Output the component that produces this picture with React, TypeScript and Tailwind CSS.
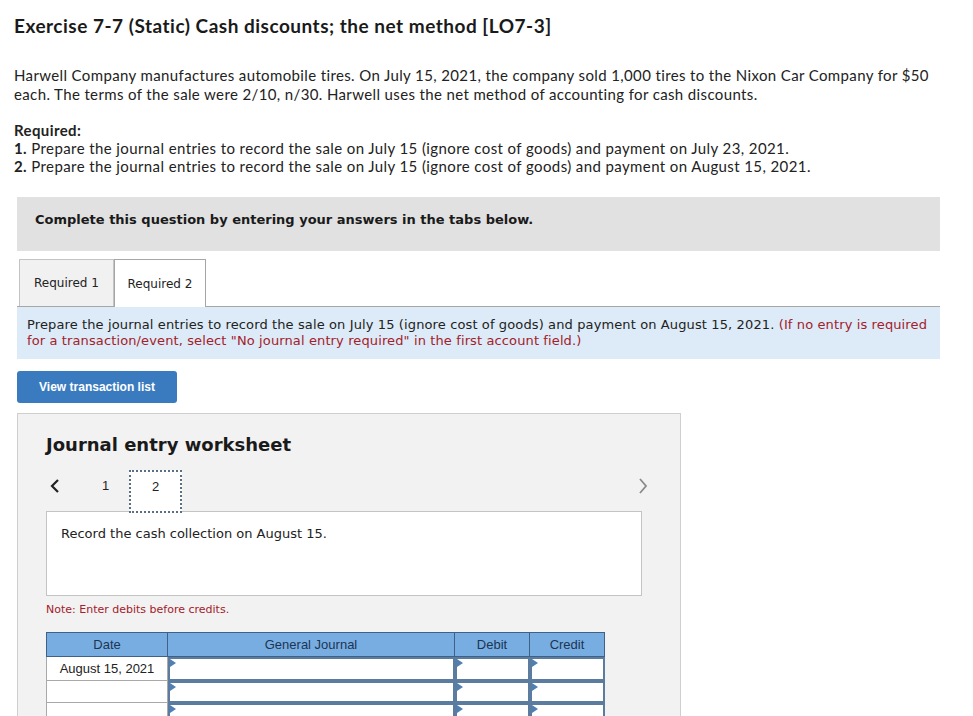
const verdana = "[font-family:'DejaVu_Sans',Verdana,sans-serif]";
const arial = "font-['Liberation_Sans',Arial,sans-serif]";

function InputCell({ w }: { w: string }) {
  return (
    <div className={`${w} relative h-full border-2 border-[#5b7c9e] bg-white`}>
      <svg className="absolute left-0 top-0" width="6" height="8" viewBox="0 0 6 8">
        <path d="M0 0 L6 4 L0 8 Z" fill="#4f7fb3" />
      </svg>
    </div>
  );
}

function JournalRow({ date, h }: { date?: string; h: string }) {
  return (
    <div className={`flex ${h}`}>
      <div className={`w-[122px] flex items-center justify-center border border-t-0 border-[#a9a9a9] bg-white text-[13px] text-[#222] ${arial}`}>
        {date}
      </div>
      <InputCell w="w-[287px]" />
      <InputCell w="w-[75px]" />
      <InputCell w="w-[75px]" />
    </div>
  );
}

export default function App() {
  return (
    <div className="w-[973px] h-[716px] overflow-hidden bg-white text-[#222]">
      <div className="pl-[14px] pt-[14px] font-['Lato',sans-serif]">
        <h1 className="text-[19px] font-bold leading-[24px] tracking-[0.5px] text-[#1a1a1a]">
          Exercise 7-7 (Static) Cash discounts; the net method [LO7-3]
        </h1>
        <p className="mt-[28px] text-[15px] leading-[19px] tracking-[0.37px] whitespace-nowrap">
          Harwell Company manufactures automobile tires. On July 15, 2021, the company sold 1,000 tires to the Nixon Car Company for $50
          <br />
          each. The terms of the sale were 2/10, n/30. Harwell uses the net method of accounting for cash discounts.
        </p>
        <div className="mt-[17px] text-[15px] leading-[18px] tracking-[0.4px]">
          <div className="font-bold">Required:</div>
          <div>
            <span className="font-bold">1.</span> Prepare the journal entries to record the sale on July 15 (ignore cost of goods) and payment on July 23, 2021.
          </div>
          <div>
            <span className="font-bold">2.</span> Prepare the journal entries to record the sale on July 15 (ignore cost of goods) and payment on August 15, 2021.
          </div>
        </div>
      </div>

      <div className={`ml-[17px] w-[923px] ${verdana}`}>
        <div className="mt-[22px] h-[54px] bg-[#e1e1e1] pl-[18px] pt-[15px] text-[13px] font-bold leading-[16px] text-[#1a1a1a]">
          Complete this question by entering your answers in the tabs below.
        </div>

        <div className="mt-[8px] flex border-b border-[#a6a6a6] pl-[2px] text-[12px]">
          <div className="flex h-[47px] w-[95px] items-center justify-center border border-b-0 border-[#c4c4c4] bg-[#f1f1f1]">
            Required 1
          </div>
          <div className="-mb-px flex h-[48px] w-[92px] items-center justify-center border border-b-0 border-[#a6a6a6] bg-white">
            Required 2
          </div>
        </div>

        <div className="h-[52px] bg-[#dcebf7] pl-[10px] pr-[8px] pt-[10px] text-[13px] leading-[16px] tracking-[0.12px] text-[#222]">
          Prepare the journal entries to record the sale on July 15 (ignore cost of goods) and payment on August 15, 2021.{" "}
          <span className="text-[#a4202a]">
            (If no entry is required for a transaction/event, select "No journal entry required" in the first account field.)
          </span>
        </div>

        <button
          className={`mt-[12px] flex h-[32px] w-[160px] items-center justify-center rounded-[3px] bg-[#3a7bc0] text-[12px] font-bold text-white ${arial}`}
        >
          View transaction list
        </button>

        <div className="mt-[10px] h-[320px] w-[664px] border border-[#cfcfcf] bg-[#f2f2f2] pl-[28px] pt-[19px]">
          <h2 className="text-[18px] font-bold leading-[24px] text-[#1a1a1a]">Journal entry worksheet</h2>

          <div className="relative mt-[13px] flex h-[43px] items-start">
            <svg width="10" height="14" viewBox="0 0 10 14" className="ml-[4px] mt-[9px]">
              <path d="M8 1 L2 7 L8 13" stroke="#222" strokeWidth="2.2" fill="none" />
            </svg>
            <span className={`ml-[42px] mt-[8px] text-[13px] leading-[16px] ${arial}`}>1</span>
            <div className={`relative z-10 ml-[20px] flex h-[43px] w-[53px] justify-center border-2 border-dotted border-[#5b6f84] bg-white pt-[7px] text-[13px] leading-[16px] ${arial}`}>
              2
            </div>
            <svg width="10" height="16" viewBox="0 0 10 16" className="absolute left-[592px] top-[8px]">
              <path d="M2 1 L8 8 L2 15" stroke="#8a8a8a" strokeWidth="1.8" fill="none" />
            </svg>
          </div>

          <div className="-mt-[2px] h-[85px] w-[596px] border border-[#c4c4c4] bg-white pl-[14px] pt-[14px] text-[13px] leading-[16px]">
            Record the cash collection on August 15.
          </div>

          <div className="mt-[7px] text-[11px] leading-[14px] text-[#a4202a]">Note: Enter debits before credits.</div>

          <div className="mt-[15px] w-[559px]">
            <div className={`flex h-[25px] bg-[#78ade2] text-[13px] text-[#1c3553] ${arial}`}>
              <div className="flex w-[122px] items-center justify-center border border-[#3f6185]">Date</div>
              <div className="flex w-[287px] items-center justify-center border border-l-0 border-[#3f6185]">General Journal</div>
              <div className="flex w-[75px] items-center justify-center border border-l-0 border-[#3f6185]">Debit</div>
              <div className="flex w-[75px] items-center justify-center border border-l-0 border-[#3f6185]">Credit</div>
            </div>
            <JournalRow date="August 15, 2021" h="h-[24px]" />
            <JournalRow h="h-[22px]" />
            <JournalRow h="h-[22px]" />
            <JournalRow h="h-[22px]" />
          </div>
        </div>
      </div>
    </div>
  );
}
